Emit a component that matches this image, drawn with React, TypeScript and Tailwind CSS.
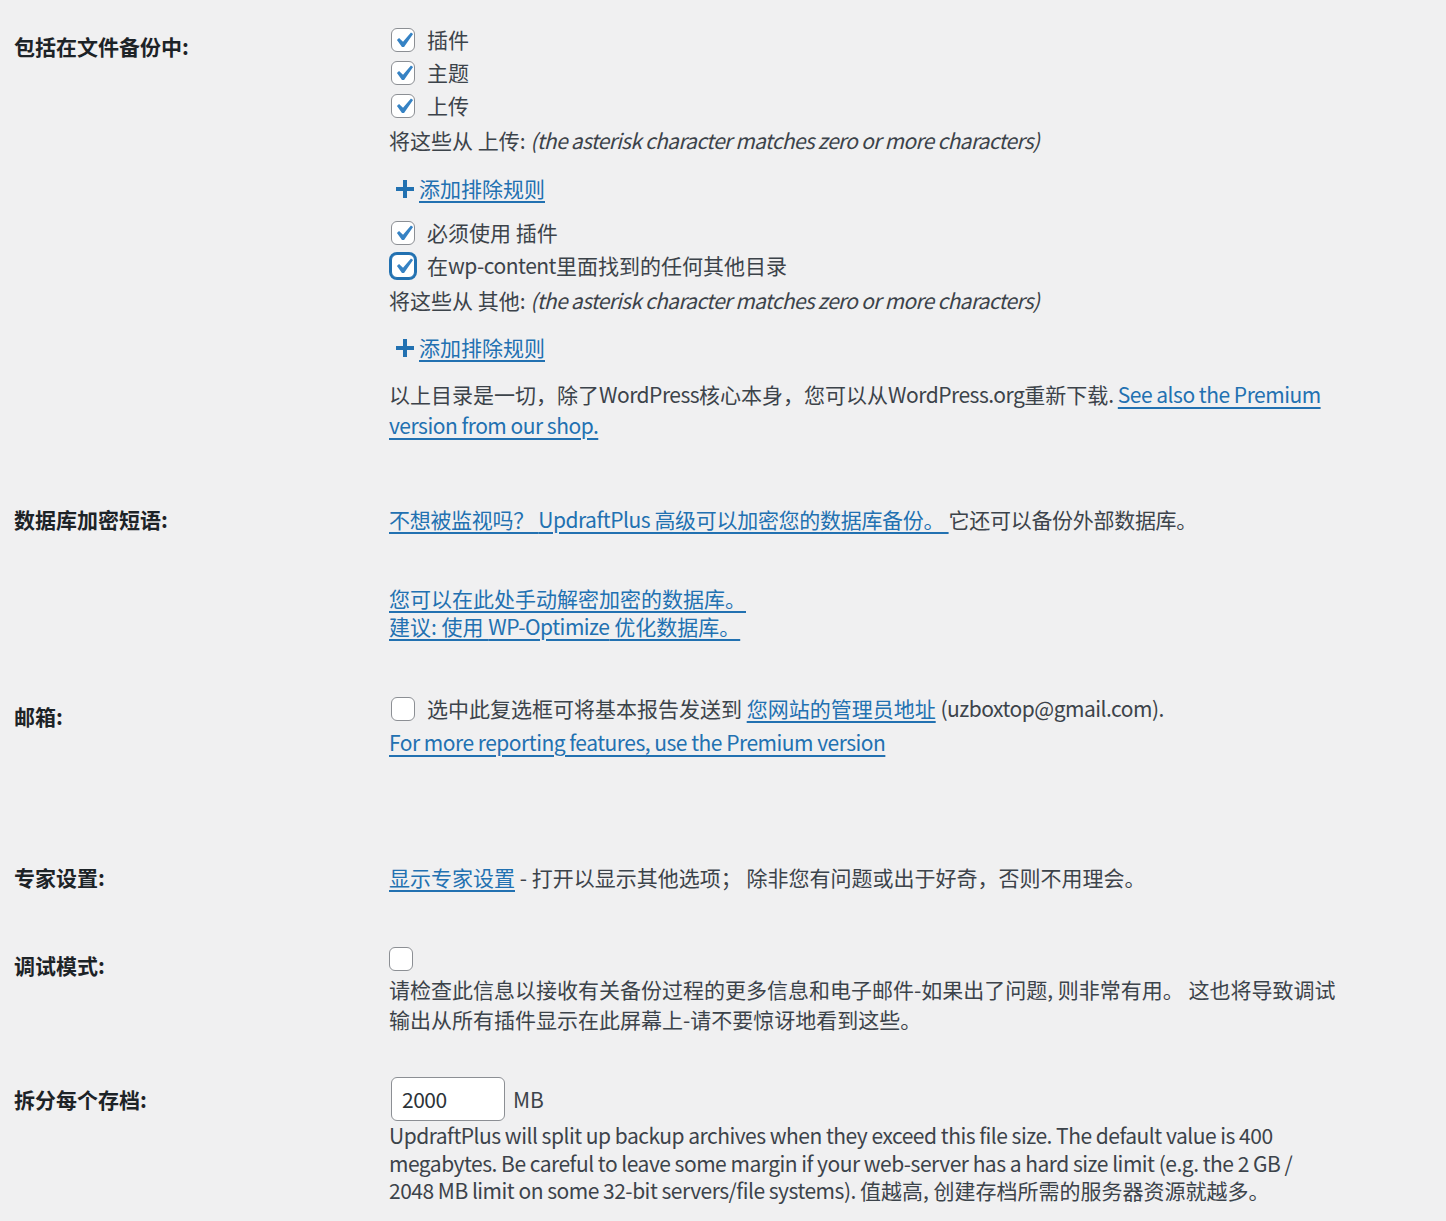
import type { ReactNode } from "react";

function Checkbox({ checked = false, focus = false, className = "" }: { checked?: boolean; focus?: boolean; className?: string }) {
  return (
    <span
      className={`relative inline-block h-6 w-6 shrink-0 rounded-[6px] border bg-white ${
        focus ? "border-[#2271b1] shadow-[0_0_0_2px_#2271b1]" : "border-[#8c8f94]"
      } ${className}`}
    >
      {checked && (
        <svg viewBox="0 0 20 20" className="absolute -left-[4px] -top-[4px] h-[31px] w-[31px]">
          <path fill="#3582c4" d="M14.83 4.89l1.34.94-5.81 8.38H9.02L5.78 9.67l1.34-1.25 2.57 2.4z" />
        </svg>
      )}
    </span>
  );
}

// latin runs are set a touch tighter so they take the width of the original UI font
function L({ children, italic = false }: { children: ReactNode; italic?: boolean }) {
  return italic ? <i className="tracking-[-0.7px]">{children}</i> : <span className="tracking-[-0.5px]">{children}</span>;
}

function CheckLine({ label, focus = false }: { label: ReactNode; focus?: boolean }) {
  return (
    <div className="flex h-[33px] items-center gap-3">
      <Checkbox checked focus={focus} className="ml-[2px]" />
      <span>{label}</span>
    </div>
  );
}

function Link({ children }: { children: ReactNode }) {
  return <a className="cursor-pointer text-[#2271b1] underline decoration-2 underline-offset-[4px]">{children}</a>;
}

function AddRule({ className = "" }: { className?: string }) {
  return (
    <div className={`flex h-[30px] items-center ${className}`}>
      <svg viewBox="0 0 20 20" className="ml-[6px] mr-[4px] h-[20px] w-[20px]">
        <path fill="#2271b1" d="M8 1h4v7h7v4h-7v7H8v-7H1V8h7z" />
      </svg>
      <Link>添加排除规则</Link>
    </div>
  );
}

function Row({ label, labelPad, className = "", children }: { label: string; labelPad: string; className?: string; children: ReactNode }) {
  return (
    <div className={`flex ${className}`}>
      <div className={`w-[375px] shrink-0 font-bold leading-[30px] text-[#1d2327] ${labelPad}`}>{label}</div>
      <div className="min-w-0 flex-1">{children}</div>
    </div>
  );
}

export default function App() {
  return (
    <div className="min-h-[1221px] bg-[#f0f0f1] pl-[14px] pt-[23px] font-['Segoe_UI','Noto_Sans_CJK_SC',sans-serif] text-[21px] text-[#3c434a]">
      {/* files to include */}
      <Row label="包括在文件备份中:" labelPad="pt-[8px]">
        <CheckLine label="插件" />
        <CheckLine label="主题" />
        <CheckLine label="上传" />
        <div className="whitespace-nowrap leading-[36px]">
          将这些从 上传: <L italic>(the asterisk character matches zero or more characters)</L>
        </div>
        <AddRule className="mt-[16px]" />
        <div className="mt-[12px]">
          <CheckLine label="必须使用 插件" />
          <CheckLine label={<>在<L>wp-content</L>里面找到的任何其他目录</>} focus />
        </div>
        <div className="whitespace-nowrap leading-[36px]">
          将这些从 其他: <L italic>(the asterisk character matches zero or more characters)</L>
        </div>
        <AddRule className="mt-[15px]" />
        <p className="mt-[16px] whitespace-nowrap leading-[31px]">
          以上目录是一切，除了<L>WordPress</L>核心本身，您可以从<L>WordPress.org</L>重新下载<L>. </L>
          <Link>
            <L>See also the Premium</L>
            <br />
            <L>version from our shop.</L>
          </Link>
        </p>
      </Row>

      {/* database encryption */}
      <Row label="数据库加密短语:" labelPad="pt-0" className="mt-[63px]">
        <div className="whitespace-nowrap leading-[30px] tracking-[-0.3px]">
          <Link>不想被监视吗？ <L>UpdraftPlus</L> 高级可以加密您的数据库备份。 </Link> 它还可以备份外部数据库。
        </div>
        <div className="mt-[50px] leading-[28px]">
          <div><Link>您可以在此处手动解密加密的数据库。 </Link></div>
          <div><Link>建议: 使用 <L>WP-Optimize</L> 优化数据库。 </Link></div>
        </div>
      </Row>

      {/* email */}
      <Row label="邮箱:" labelPad="pt-[9px]" className="mt-[52px]">
        <div className="flex h-[33px] items-center gap-3 whitespace-nowrap">
          <Checkbox className="ml-[2px]" />
          <span>
            选中此复选框可将基本报告发送到 <Link>您网站的管理员地址</Link> <L>(uzboxtop@gmail.com).</L>
          </span>
        </div>
        <div className="mt-[2px] leading-[30px]">
          <Link><L>For more reporting features, use the Premium version</L></Link>
        </div>
      </Row>

      {/* expert settings */}
      <Row label="专家设置:" labelPad="pt-0" className="mt-[105px]">
        <div className="whitespace-nowrap leading-[30px]">
          <Link>显示专家设置</Link> - 打开以显示其他选项； 除非您有问题或出于好奇，否则不用理会。
        </div>
      </Row>

      {/* debug mode */}
      <Row label="调试模式:" labelPad="pt-[3px]" className="mt-[55px]">
        <div className="flex h-6">
          <Checkbox />
        </div>
        <p className="mt-[3px] whitespace-nowrap leading-[30px]">
          请检查此信息以接收有关备份过程的更多信息和电子邮件-如果出了问题, 则非常有用。 这也将导致调试
          <br />
          输出从所有插件显示在此屏幕上-请不要惊讶地看到这些。
        </p>
      </Row>

      {/* split archives */}
      <Row label="拆分每个存档:" labelPad="pt-[7px]" className="mt-[43px]">
        <div className="flex items-center">
          <input
            type="text"
            defaultValue="2000"
            className="ml-[2px] h-[44px] w-[114px] rounded-[6px] border border-[#8c8f94] bg-white px-[10px] text-[21px] tracking-[-0.5px] text-[#2c3338] outline-none"
          />
          <span className="ml-[8px] mt-[2px]">MB</span>
        </div>
        <p className="mt-[1px] whitespace-nowrap leading-[27.5px]">
          <L>UpdraftPlus will split up backup archives when they exceed this file size. The default value is 400</L>
          <br />
          <L>megabytes. Be careful to leave some margin if your web-server has a hard size limit (e.g. the 2 GB /</L>
          <br />
          <L>2048 MB limit on some 32-bit servers/file systems). </L>值越高, 创建存档所需的服务器资源就越多。
        </p>
      </Row>
    </div>
  );
}
